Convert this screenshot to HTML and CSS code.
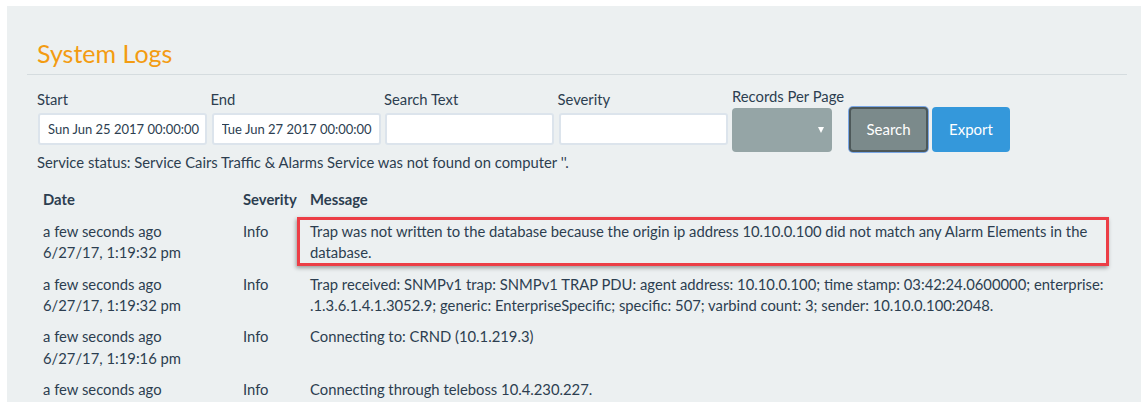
FILE: index.html
```html
<!DOCTYPE html>
<html>
<head>
<meta charset="utf-8">
<link rel="stylesheet" href="styles.css">
</head>
<body>
<div class="panel">
  <div class="inner">
    <h3 class="title">System Logs</h3>
  </div>
  <hr class="rule">
  <div class="inner">
    <div class="filters">
      <div class="field">
        <label>Start</label>
        <input class="input" type="text" value="Sun Jun 25 2017 00:00:00">
      </div>
      <div class="field">
        <label>End</label>
        <input class="input" type="text" value="Tue Jun 27 2017 00:00:00">
      </div>
      <div class="field">
        <label>Search Text</label>
        <input class="input" type="text" value="">
      </div>
      <div class="field">
        <label>Severity</label>
        <input class="input" type="text" value="">
      </div>
      <div class="field field-select">
        <label>Records Per Page</label>
        <div class="select"><span class="caret"></span></div>
      </div>
      <button class="btn btn-search">Search</button>
      <button class="btn btn-export">Export</button>
    </div>
    <div class="status">Service status: Service Cairs Traffic &amp; Alarms Service was not found on computer ''.</div>
    <table class="logs">
      <thead>
        <tr><th class="c-date">Date</th><th class="c-sev">Severity</th><th>Message</th></tr>
      </thead>
      <tbody>
        <tr>
          <td>a few seconds ago<br>6/27/17, 1:19:32 pm</td>
          <td>Info</td>
          <td class="msg">Trap was not written to the database because the origin ip address 10.10.0.100 did not match any Alarm Elements in the database.<span class="highlight"></span></td>
        </tr>
        <tr>
          <td>a few seconds ago<br>6/27/17, 1:19:32 pm</td>
          <td>Info</td>
          <td>Trap received: SNMPv1 trap: SNMPv1 TRAP PDU: agent address: 10.10.0.100; time stamp: 03:42:24.0600000; enterprise: .1.3.6.1.4.1.3052.9; generic: EnterpriseSpecific; specific: 507; varbind count: 3; sender: 10.10.0.100:2048.</td>
        </tr>
        <tr>
          <td>a few seconds ago<br>6/27/17, 1:19:16 pm</td>
          <td>Info</td>
          <td>Connecting to: CRND (10.1.219.3)</td>
        </tr>
        <tr>
          <td>a few seconds ago<br>6/27/17, 1:19:16 pm</td>
          <td>Info</td>
          <td>Connecting through teleboss 10.4.230.227.</td>
        </tr>
      </tbody>
    </table>
  </div>
</div>
</body>
</html>
```

FILE: styles.css
```css
html, body {
  margin: 0;
  padding: 0;
  background: #ffffff;
  height: 100%;
  overflow: hidden;
}
body {
  font-family: Lato, "Open Sans", sans-serif;
  font-size: 14.8px;
  line-height: 21.43px;
  color: #2c3e50;
}
.panel {
  margin: 6px 0 0 7px;
  padding: 34px 14px 0 20px;
  background: #ecf0f1;
  min-height: 500px;
}
.inner {
  padding-left: 10px;
}
.title {
  margin: 0;
  font-size: 25px;
  line-height: 26.4px;
  font-weight: 400;
  color: #f39c12;
}
.rule {
  margin: 8px 0 0 0;
  border: 0;
  border-top: 1px solid #d5dcdf;
  height: 0;
}
.filters {
  display: flex;
  align-items: flex-end;
  margin-top: 11px;
}
.field {
  display: flex;
  flex-direction: column;
  width: 169px;
  margin-right: 4.5px;
  margin-bottom: 7px;
}
.field label {
  display: block;
  margin-bottom: 2px;
}
.input {
  box-sizing: border-box;
  width: 169px;
  height: 32px;
  margin: 0 0 0 1px;
  padding: 0 4px 0 8px;
  border: 2px solid #dce4ec;
  border-radius: 3px;
  background: #fff;
  font-family: Lato, sans-serif;
  font-size: 13px;
  color: #2c3e50;
  outline: none;
}
.field-select {
  width: 100px;
  margin-left: 1px;
  margin-right: 17px;
  margin-bottom: 0;
}
.field-select label {
  margin-bottom: 0;
  white-space: nowrap;
}
.select {
  position: relative;
  box-sizing: border-box;
  width: 100px;
  height: 44px;
  background: #95a5a6;
  border-radius: 4px;
}
.caret {
  position: absolute;
  right: 8px;
  top: 19px;
  width: 0;
  height: 0;
  border-left: 3.5px solid transparent;
  border-right: 3.5px solid transparent;
  border-top: 6px solid #ffffff;
}
.btn {
  box-sizing: border-box;
  height: 45px;
  padding: 0;
  border-radius: 4px;
  font-family: Lato, sans-serif;
  font-size: 15px;
  color: #ffffff;
  cursor: pointer;
}
.btn-search {
  width: 79px;
  background: #7b8a8b;
  border: 2px solid #4d5859;
  box-shadow: 0 0 0 1px #7aa7e6;
  margin-right: 4px;
}
.btn-export {
  width: 78px;
  background: #3498db;
  border: 0;
}
.status {
  margin-top: 0;
}
.logs {
  margin: 10px 0 0 1px;
  width: 1074px;
  border-collapse: collapse;
}
.logs th, .logs td {
  padding: 5px 5px;
  text-align: left;
  vertical-align: top;
}
.logs th {
  font-weight: 700;
  padding-top: 6px;
  padding-bottom: 5px;
}
.c-date {
  width: 190px;
}
.c-sev {
  width: 57px;
}
.msg {
  position: relative;
}
.highlight {
  position: absolute;
  left: -8px;
  right: 3px;
  top: 1px;
  bottom: 3px;
  border: 3px solid #ec3e46;
  box-shadow: -1px 2px 4px rgba(0, 0, 0, 0.35);
  pointer-events: none;
}
```
